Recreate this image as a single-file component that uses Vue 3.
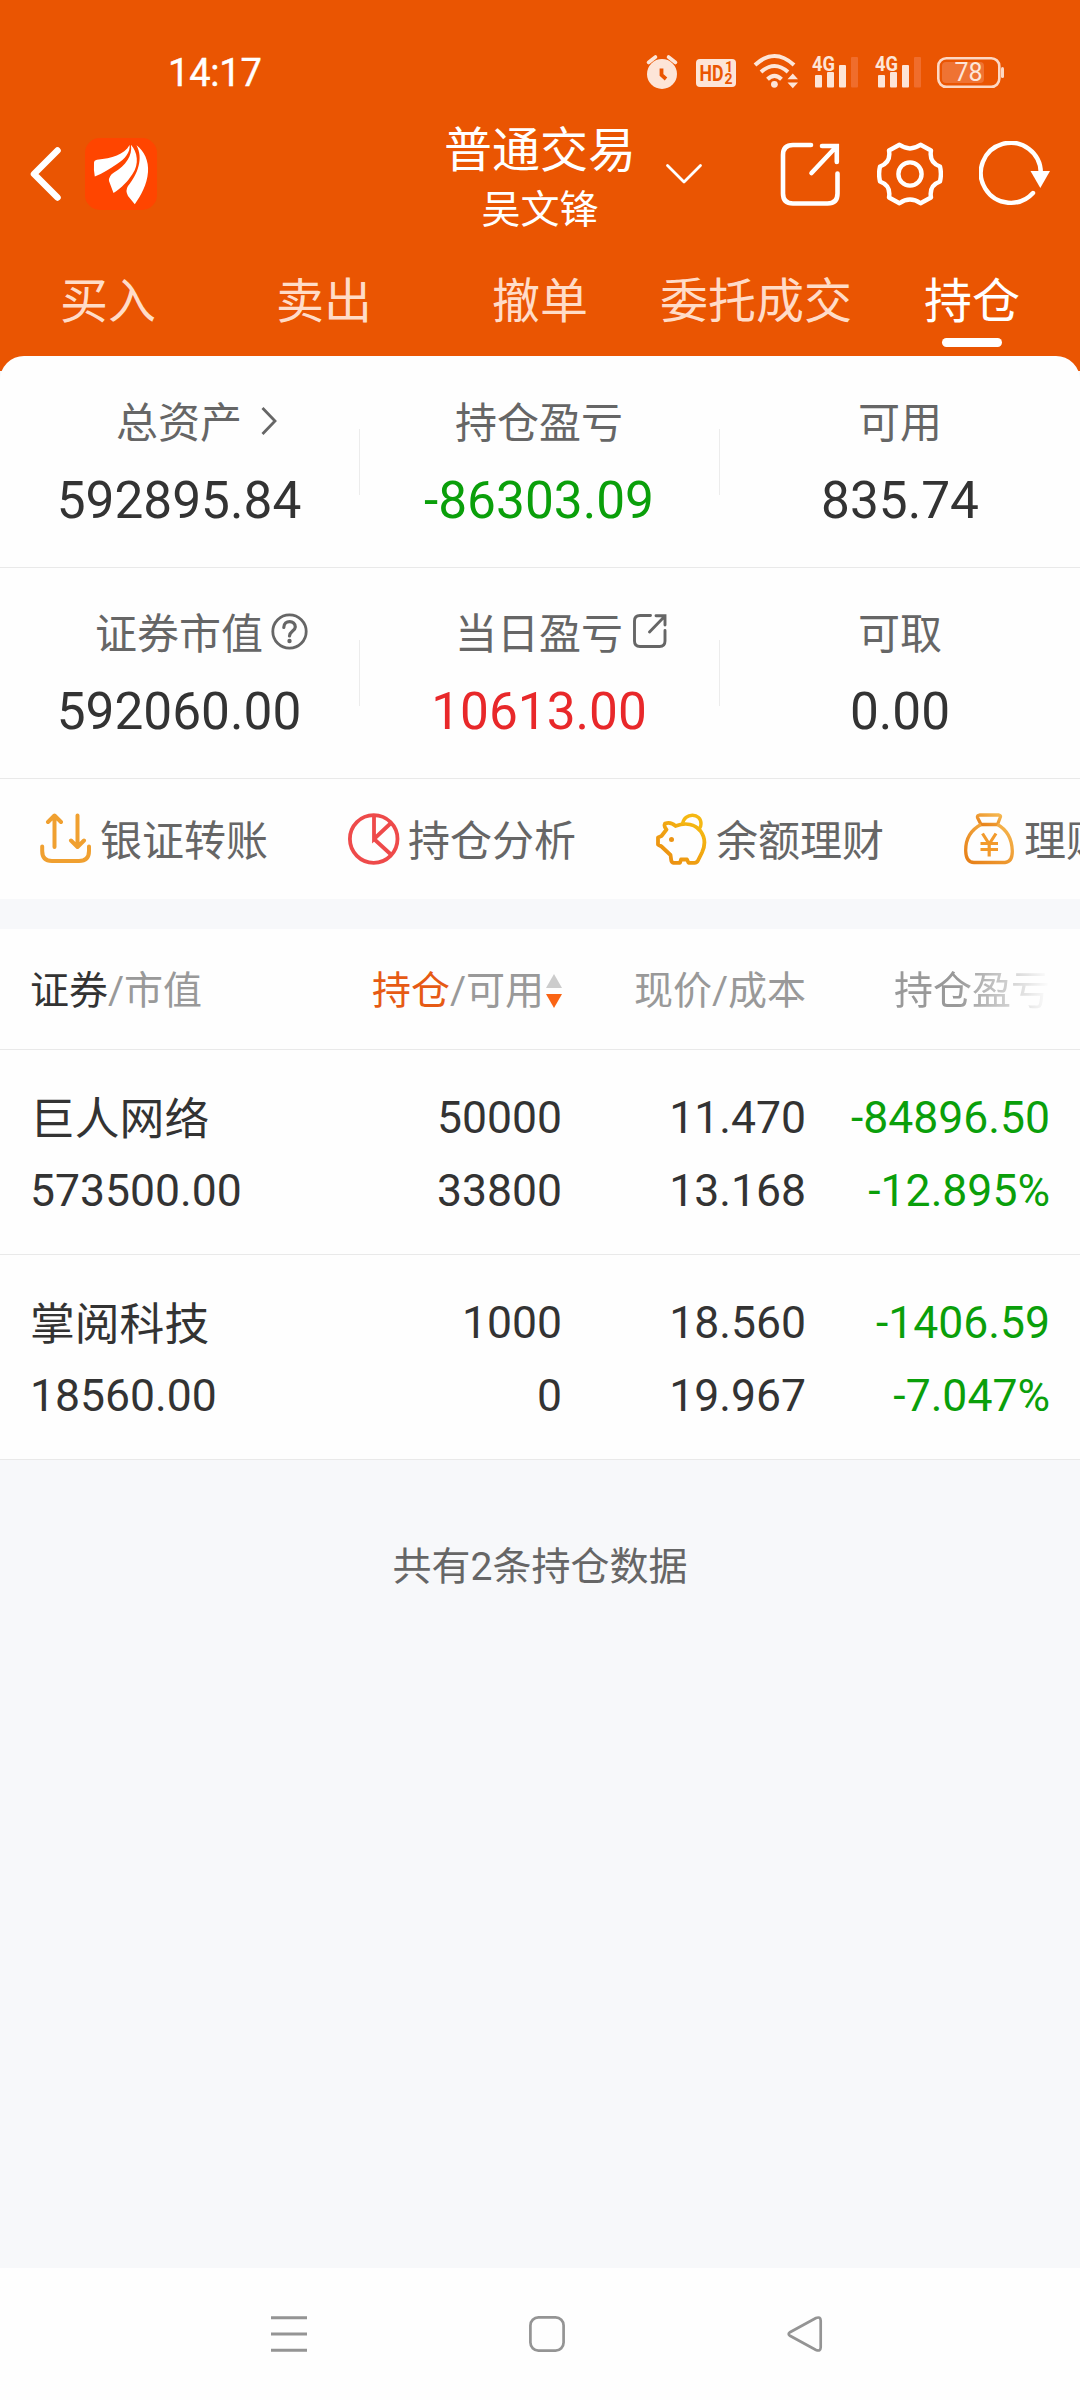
<script setup>
const tabs = ['买入', '卖出', '撤单', '委托成交', '持仓']
const activeTab = '持仓'

const summary = [
  [
    { label: '总资产', value: '592895.84', icon: 'arrow' },
    { label: '持仓盈亏', value: '-86303.09', tone: 'down' },
    { label: '可用', value: '835.74' },
  ],
  [
    { label: '证券市值', value: '592060.00', icon: 'help' },
    { label: '当日盈亏', value: '10613.00', tone: 'up', icon: 'share' },
    { label: '可取', value: '0.00' },
  ],
]

const shortcuts = [
  { icon: 'transfer', label: '银证转账' },
  { icon: 'pie', label: '持仓分析' },
  { icon: 'piggy', label: '余额理财' },
  { icon: 'bag', label: '理财' },
]

const holdings = [
  { name: '巨人网络', market: '573500.00', amount: '50000', usable: '33800', price: '11.470', cost: '13.168', profit: '-84896.50', rate: '-12.895%' },
  { name: '掌阅科技', market: '18560.00', amount: '1000', usable: '0', price: '18.560', cost: '19.967', profit: '-1406.59', rate: '-7.047%' },
]
</script>

<template>
  <div class="screen">
    <header class="header">
      <div class="status">
        <span class="clock">14:17</span>
        <svg class="status-icons" width="370" height="64" viewBox="640 40 370 64">
          <g fill="#fde5d8">
            <circle cx="662" cy="74" r="15" />
            <path d="M648.500 62.500L655.500 57M668.500 57L675.500 62.500" stroke="#fde5d8" stroke-width="3.600" stroke-linecap="round" />
            <path d="M661.500 68.500V75L666 79" fill="none" stroke="#ea5502" stroke-width="3.800" />
            <rect x="696" y="59" width="40" height="28" rx="4" />
            <circle cx="774.400" cy="84.300" r="3.400" />
            <path d="M787.500 79.300L792.800 73.600L798 79.300ZM787.500 82.500L792.800 88.300L798 82.500Z" />
          </g>
          <g fill="none" stroke="#fde5d8" stroke-width="4">
            <path d="M755 65Q774.500 47 794 65" />
            <path d="M761 72Q774.500 60 788 72" />
            <path d="M767.500 79.300Q774.500 72.500 781.500 79.300" />
          </g>
          <text class="hd" x="699.500" y="81" textLength="24" lengthAdjust="spacingAndGlyphs">HD</text>
          <text class="hd-num" x="725" y="72">1</text>
          <text class="hd-num" x="724.500" y="84">2</text>
          <g v-for="dx in [0, 63]" :key="dx" :transform="`translate(${dx} 0)`" fill="#fde5d8">
            <text class="net" x="812" y="70.500" textLength="23" lengthAdjust="spacingAndGlyphs">4G</text>
            <rect x="815" y="75" width="7" height="12.500" rx="1" />
            <rect x="827" y="72" width="7" height="15.500" rx="1" />
            <rect x="839" y="65" width="7" height="22.500" rx="1" />
            <rect x="851" y="57" width="7" height="30.500" rx="1" fill="#f06d2c" />
          </g>
          <rect x="942" y="62" width="42" height="21" rx="4" fill="#ef7333" />
          <rect x="938.300" y="58.200" width="61" height="28.600" rx="8" fill="none" stroke="#fdd8c4" stroke-width="2.600" />
          <rect x="1001" y="67" width="3" height="11" rx="1.500" fill="#fdd8c4" />
          <text class="battery" x="968.500" y="81" text-anchor="middle">78</text>
        </svg>
      </div>

      <div class="titlebar">
        <div class="title-left">
          <svg width="34" height="58" viewBox="0 0 34 58"><path d="M28.500 5.500L5 29L28.500 52.500" fill="none" stroke="#fff" stroke-width="6.500" stroke-linecap="round" stroke-linejoin="round" /></svg>
          <svg class="logo" width="72" height="72" viewBox="0 0 72 72">
            <rect width="72" height="72" rx="15" fill="#ff4500" />
            <g fill="#fff">
              <path d="M9 25Q9 22.300 12 21.800C27 20 39 17 44.600 7C45.500 14 40 21 32 26C24 31 18 35.500 9.800 38.500Q8.500 32 9 25Z" />
              <path d="M46 6.700C52.500 14 54.500 26 47.500 36C43 43 37 49.500 28.500 55L24 43Q23.500 38 29 34.500C41 27 47.500 18 46 6.700Z" />
              <path d="M51.500 7.300C59 13 64 23 63 34C62 47 56 57 49.800 66.300L43 58Q40 52.500 43 48C53 36 58.500 20 51.500 7.300Z" />
            </g>
          </svg>
        </div>
        <div class="title">
          <div class="title-main">普通交易</div>
          <div class="title-sub">吴文锋</div>
        </div>
        <div class="title-right">
          <svg class="i-down" width="38" height="22" viewBox="0 0 38 22"><path d="M2.500 2.500L19 19L35.500 2.500" fill="none" stroke="#fff" stroke-width="2.800" stroke-linecap="round" stroke-linejoin="round" /></svg>
          <svg class="i-share" width="60" height="66" viewBox="780 141 60 66"><path d="M811 145H793Q783 145 783 155V193.500Q783 203.500 793 203.500H827.500Q837.500 203.500 837.500 193.500V173.500M811.500 173L836 147M822 146H836.800V162" fill="none" stroke="#fff" stroke-width="4.600" stroke-linecap="round" /></svg>
          <svg class="i-gear" width="66" height="66" viewBox="0 -1 66 66">
            <g fill="none" stroke="#fff" stroke-width="4.400" stroke-linejoin="round">
              <path d="M22.500 2.800Q33 10 43.500 2.800L54 8.500C52.500 17 56 22 63 24.500Q64.800 32 63 39.500C56 42 52.500 47 54 55.500L43.500 61.200Q33 54 22.500 61.200L12 55.500C13.500 47 10 42 3 39.500Q1.200 32 3 24.500C10 22 13.500 17 12 8.500Z" />
              <circle cx="33" cy="32" r="11.600" />
            </g>
          </svg>
          <svg class="i-refresh" width="72" height="66" viewBox="979 141 72 66">
            <path d="M1033 193A30 30 0 1 1 1040.800 173" fill="none" stroke="#fff" stroke-width="4.400" stroke-linecap="round" />
            <path d="M1030.500 171H1050L1040.300 188Z" fill="#fff" />
          </svg>
        </div>
      </div>

      <nav class="tabs">
        <div v-for="tab in tabs" :key="tab" class="tab" :class="{ active: tab === activeTab }">
          <span>{{ tab }}</span>
        </div>
      </nav>
    </header>

    <section class="card">
      <div v-for="(row, r) in summary" :key="r" class="sum-row">
        <div v-for="cell in row" :key="cell.label" class="sum-cell">
          <div class="sum-label">
            <span class="sum-text">{{ cell.label }}</span>
            <svg v-if="cell.icon === 'arrow'" class="s-arrow" width="18" height="30" viewBox="0 0 18 30"><path d="M2.500 2L15 15L2.500 28" fill="none" stroke="#666" stroke-width="2.800" /></svg>
            <svg v-else-if="cell.icon === 'help'" class="s-help" width="37" height="37" viewBox="0 0 37 37">
              <g fill="none" stroke="#666" stroke-width="2.800"><circle cx="18.500" cy="18.500" r="16.700" /><path d="M12.800 14.500C12.800 6.500 24.500 6.800 24.300 14C24.200 18 18.700 18.300 18.500 23" stroke-width="3.200" stroke-linecap="round" /></g>
              <circle cx="18.500" cy="28" r="2.200" fill="#666" />
            </svg>
            <svg v-else-if="cell.icon === 'share'" class="s-share" width="36" height="36" viewBox="0 0 36 36"><path d="M18.500 2.500H8Q2.500 2.500 2.500 8V28Q2.500 33.500 8 33.500H27.500Q33 33.500 33 28V17.500M17.500 19L32.500 3.500M24 2.700H33V12" fill="none" stroke="#666" stroke-width="2.900" stroke-linecap="round" /></svg>
          </div>
          <div class="sum-value" :class="cell.tone">{{ cell.value }}</div>
        </div>
      </div>

      <div class="shortcuts">
        <div v-for="s in shortcuts" :key="s.label" class="shortcut">
          <svg v-if="s.icon === 'transfer'" width="52" height="52" viewBox="0 0 52 52">
            <g fill="none" stroke="#f0a030" stroke-width="4" stroke-linecap="round" stroke-linejoin="round"><path d="M2.200 33.500V38Q2.200 48 12 48H39Q49 48 49 38V33.500M14.500 34V3M8 9L14.500 2.500L21 9M37.500 2.500V33M31 27.500L37.500 34L44 27.500" /></g>
          </svg>
          <svg v-else-if="s.icon === 'pie'" width="52" height="52" viewBox="0 0 52 52">
            <g fill="none" stroke="#ee4a4a" stroke-width="3.800"><circle cx="25.700" cy="26" r="23.800" /><path d="M26 2V26L43.500 9.500M26 26L43.500 42" /></g>
          </svg>
          <svg v-else-if="s.icon === 'piggy'" width="52" height="52" viewBox="0 0 52 52">
            <defs><linearGradient id="pig" x1="0" y1="1" x2="1" y2="0"><stop offset="0" stop-color="#ea8a12" /><stop offset="1" stop-color="#f6bd12" /></linearGradient></defs>
            <path d="M9 10.500Q15 8.500 19.500 13C30 9 39 11.500 44.500 18C50 25.500 49 33 46 39.500L42 47.500Q41 49.800 38.500 49.800H32.500L31 46.500H25L24 49.800H17.500Q15.500 49.500 15.200 47L14.500 42L5.500 33.500L2 31.500V24.500L5.500 23L10.500 16.500Q7.500 13.500 9 10.500Z" fill="none" stroke="url(#pig)" stroke-width="3.800" stroke-linejoin="round" />
            <path d="M26.500 11C28 -1 45.500 -.5 45 11Q45 13.500 43.500 15.500" fill="none" stroke="#f5b813" stroke-width="3.400" />
            <circle cx="15.500" cy="26.500" r="2.500" fill="#ec9414" />
          </svg>
          <svg v-else width="52" height="52" viewBox="0 0 52 52">
            <defs><linearGradient id="bag" x1="0" y1="1" x2="1" y2="0"><stop offset="0" stop-color="#e67e16" /><stop offset="1" stop-color="#f6b850" /></linearGradient></defs>
            <g fill="none" stroke="url(#bag)" stroke-width="3.300" stroke-linejoin="round">
              <path d="M15.500 2H35Q37.500 2.500 36 5L33.500 11.500H17L13.500 4.500Q13 2.500 15.500 2Z" />
              <path d="M17 11.500C5 18 1.500 28 1.700 38Q2 49.500 10 49.500H41Q48.500 49 48.300 38C48 28 45 18 33.500 11.500" />
              <path d="M18.500 20.500L25.200 31L32 20.500M25.200 31V43.500M16.500 30.500H34M16.500 36.500H34" stroke="#f29a2c" stroke-width="3.200" />
            </g>
          </svg>
          <span>{{ s.label }}</span>
        </div>
      </div>
    </section>

    <section class="table">
      <div class="thead">
        <div><span class="dark">证券</span>/市值</div>
        <div class="th-sort">
          <span><span class="hot">持仓</span>/可用</span>
          <svg width="16" height="34" viewBox="0 0 16 34"><path d="M0 14L8 0L16 14Z" fill="#ccc" /><path d="M0 20H16L8 34Z" fill="#fa6414" /></svg>
        </div>
        <div class="num">现价/成本</div>
        <div class="fade">持仓盈亏</div>
      </div>
      <div v-for="h in holdings" :key="h.name" class="trow">
        <div class="names"><span class="name">{{ h.name }}</span><span>{{ h.market }}</span></div>
        <div class="num">{{ h.amount }}<br />{{ h.usable }}</div>
        <div class="num">{{ h.price }}<br />{{ h.cost }}</div>
        <div class="num down">{{ h.profit }}<br />{{ h.rate }}</div>
      </div>
    </section>

    <p class="total">共有2条持仓数据</p>

    <footer class="sysnav">
      <svg width="36" height="38" viewBox="0 0 36 38"><path d="M0 2.700H36M0 19H36M0 35.300H36" stroke="#949494" stroke-width="3" /></svg>
      <svg width="36" height="38" viewBox="0 0 36 38"><rect x="1.400" y="2.400" width="33.200" height="33.200" rx="8" fill="none" stroke="#949494" stroke-width="2.700" /></svg>
      <svg width="36" height="38" viewBox="0 0 36 38"><path d="M29 3L3 17.200Q.3 19 3 20.800L29 35Q33.500 36.700 33.700 32.500V5.500Q33.500 1.300 29 3Z" fill="none" stroke="#949494" stroke-width="2.700" /></svg>
    </footer>
  </div>
</template>

<style>
body {
  background: #f7f8fa;
}
</style>

<style scoped>
.screen {
  width: 1080px;
  height: 2400px;
  display: flex;
  flex-direction: column;
  overflow: hidden;
  background: #f7f8fa;
  color: #333;
  font-family: Roboto, "Noto Sans CJK SC", sans-serif;
}
svg {
  display: block;
  flex: none;
}
.header {
  flex: none;
  background: #ea5502;
  color: #fff;
  padding-bottom: 15px;
}
.status {
  height: 64px;
  padding: 40px 70px 0 168px;
  display: flex;
  justify-content: space-between;
  align-items: center;
}
.clock {
  font-size: 38px;
  font-weight: 400;
  letter-spacing: -0.2px;
  line-height: 64px;
  padding-top: 2px;
  -webkit-text-stroke: 0.4px #fff;
}
.hd {
  font: 700 22px Roboto, sans-serif;
  fill: #ea5502;
}
.hd-num {
  font: 700 14px Roboto, sans-serif;
  fill: #ea5502;
}
.net {
  font: 700 21px Roboto, sans-serif;
}
.battery {
  font: 400 25px Roboto, sans-serif;
  fill: #fde5d8;
}
.titlebar {
  height: 140px;
  display: grid;
  grid-template-columns: 1fr 192px 1fr;
  align-items: center;
}
.title-left {
  display: flex;
  align-items: center;
  gap: 22px;
  padding-left: 29px;
}
.title {
  padding-top: 12px;
  text-align: center;
  white-space: nowrap;
}
.title-main {
  font-size: 48px;
  line-height: 60px;
}
.title-sub {
  font-size: 39px;
  line-height: 58px;
}
.title-right {
  display: flex;
  align-items: center;
}
.i-down {
  margin-left: 29px;
}
.i-share {
  margin-left: 77px;
}
.i-gear {
  margin-left: 37px;
}
.i-refresh {
  margin-left: 36px;
}
.tabs {
  height: 112px;
  display: grid;
  grid-template-columns: repeat(5, 216px);
}
.tab {
  display: flex;
  flex-direction: column;
  align-items: center;
  color: #ffdcc8;
  font-size: 48px;
  line-height: 94px;
  padding-top: 11px;
  box-sizing: border-box;
  height: 112px;
  white-space: nowrap;
}
.tab span {
  height: 83px;
}
.tab.active {
  color: #fff;
}
.tab.active::after {
  content: "";
  width: 60px;
  height: 9px;
  border-radius: 5px;
  background: #fff;
}
.card {
  flex: none;
  background: #fefefe;
  margin-top: -15px;
  border-radius: 24px 24px 0 0;
}
.sum-row {
  height: 212px;
  box-sizing: border-box;
  border-bottom: 1px solid #e9e9e9;
  display: grid;
  grid-template-columns: repeat(3, 360px);
}
.sum-row + .sum-row {
  height: 211px;
}
.sum-cell {
  padding-top: 38px;
  background: linear-gradient(#ececec, #ececec) no-repeat right 73px / 1px 66px;
}
.sum-row + .sum-row .sum-cell {
  padding-top: 37px;
  background-position-y: 72px;
}
.sum-cell:last-child {
  background: none;
}
.sum-label {
  height: 60px;
  display: grid;
  grid-template-columns: 1fr auto 1fr;
  align-items: center;
  padding-right: 2px;
  color: #666;
  font-size: 42px;
  line-height: 60px;
}
.sum-text {
  grid-column: 2;
}
.s-arrow {
  margin-left: 18px;
  margin-bottom: 6px;
}
.s-help {
  margin-left: 8px;
  margin-bottom: 8px;
}
.s-share {
  margin-left: 9px;
  margin-bottom: 8px;
}
.sum-value {
  font-size: 51.4px;
  line-height: 60px;
  margin-top: 17px;
  padding-right: 2px;
  text-align: center;
}
.sum-cell:last-child .sum-label,
.sum-cell:last-child .sum-value {
  padding-right: 0;
}
.up {
  color: #e8282a;
}
.down {
  color: #0a9f0a;
}
.shortcuts {
  height: 120px;
  display: flex;
  padding-left: 40px;
  overflow: hidden;
}
.shortcut {
  flex: none;
  width: 308px;
  display: flex;
  align-items: center;
  gap: 8px;
  font-size: 42px;
  line-height: 60px;
  color: #666;
  white-space: nowrap;
}
.shortcut span {
  padding-top: 6px;
}
.table {
  flex: none;
  margin-top: 30px;
  background: #fefefe;
}
.thead,
.trow {
  box-sizing: border-box;
  border-bottom: 1px solid #e9e9e9;
  display: grid;
  grid-template-columns: 332px 200px 244px 244px;
  padding: 0 30px;
}
.thead {
  height: 121px;
  padding-top: 4px;
  align-items: center;
  font-size: 39px;
  line-height: 60px;
  color: #999;
  white-space: nowrap;
}
.dark {
  color: #333;
}
.hot {
  color: #e65a14;
}
.th-sort {
  display: flex;
  align-items: center;
  justify-content: flex-end;
  gap: 2px;
}
.fade {
  padding-left: 88px;
  -webkit-mask-image: linear-gradient(90deg, #000 62%, transparent 100%);
  mask-image: linear-gradient(90deg, #000 62%, transparent 100%);
}
.trow {
  height: 205px;
  padding-top: 32px;
  font-size: 44.5px;
  line-height: 73px;
}
.names {
  display: flex;
  flex-direction: column;
}
.name {
  height: 72px;
  padding-top: 1px;
  font-size: 44.8px;
}
.num {
  text-align: right;
}
.total {
  margin: 77px 0 0;
  text-align: center;
  font-size: 39px;
  line-height: 60px;
  color: #666;
}
.sysnav {
  margin-top: auto;
  height: 132px;
  background: #fefefe;
  display: flex;
  justify-content: center;
  align-items: center;
  gap: 222px;
  padding-left: 14px;
}
</style>
